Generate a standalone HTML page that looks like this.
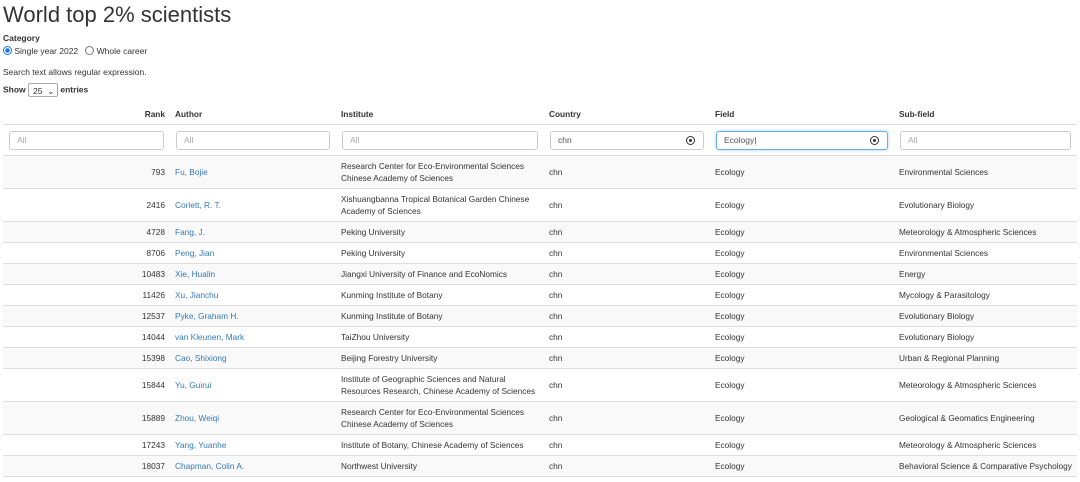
<!DOCTYPE html>
<html><head><meta charset="utf-8"><style>
body{margin:0;background:#fff;font-family:"Liberation Sans",Arial,sans-serif;color:#333;width:1080px;height:482px;overflow:hidden;position:relative}
h1{position:absolute;left:3px;top:2px;margin:0;font-weight:normal;font-size:22px;color:#333}
.t{position:absolute;font-size:8.5px}
table{position:absolute;left:3px;top:104px;width:1074px;border-collapse:collapse;table-layout:fixed;font-size:8.3px}
td,th{padding:0 5px;text-align:left;vertical-align:middle;line-height:12px;white-space:nowrap;overflow:hidden}
th{height:20px;font-weight:bold;border-bottom:1px solid #ddd}
tr.f td{height:30px;border-bottom:1px solid #ddd;padding:0 6px}
.in{height:19px;border:1px solid #ccc;border-radius:3px;box-sizing:border-box;color:#aaa;padding-left:7px;line-height:17px;position:relative;font-size:8.5px}
.in.v{color:#555}.in.foc{border-color:#66afe9;box-shadow:0 0 3px rgba(102,175,233,.6)}
.x{position:absolute;right:8px;top:4px;width:7px;height:7px;border:1px solid #333;border-radius:50%}
.x:after{content:"";position:absolute;left:2px;top:2px;width:3px;height:3px;background:#333;border-radius:50%}
tbody tr td{border-bottom:1px solid #ddd;color:#333}
tbody tr:nth-child(odd) td{background:#f9f9f9}
td.r{text-align:right}
a{color:#337ab7;text-decoration:none}
.h1r td{height:32px}.h2r td{height:20px}
</style></head><body>
<h1>World top 2% scientists</h1>
<div class="t" style="left:3px;top:33px;font-weight:bold">Category</div>
<div class="t" style="left:3px;top:46px"><span style="display:inline-block;width:7px;height:7px;border-radius:50%;border:1px solid #1a73e8;vertical-align:-1px;background:radial-gradient(#1a73e8 40%,#fff 50%)"></span> Single year 2022 &nbsp; <span style="display:inline-block;width:7px;height:7px;border-radius:50%;border:1px solid #777;vertical-align:-1px"></span> Whole career</div>
<div class="t" style="left:3px;top:67px">Search text allows regular expression.</div>
<div class="t" style="left:3px;top:83px;font-weight:bold">Show <span style="display:inline-block;width:30px;height:14px;border:1px solid #aaa;border-radius:2px;font-weight:normal;line-height:14px;padding-left:4px;box-sizing:border-box;vertical-align:middle">25 &nbsp;⌄</span> entries</div>
<table>
<colgroup><col style="width:167px"><col style="width:166px"><col style="width:208px"><col style="width:166px"><col style="width:184px"><col></colgroup>
<thead><tr><th style="text-align:right">Rank</th><th>Author</th><th>Institute</th><th>Country</th><th>Field</th><th>Sub-field</th></tr>
<tr class="f"><td><div class="in">All</div></td><td><div class="in">All</div></td><td><div class="in">All</div></td><td><div class="in v">chn<span class="x"></span></div></td><td><div class="in v foc">Ecology|<span class="x"></span></div></td><td><div class="in">All</div></td></tr></thead>
<tbody>
<tr class="h1r"><td class="r">793</td><td><a>Fu, Bojie</a></td><td>Research Center for Eco-Environmental Sciences<br>Chinese Academy of Sciences</td><td>chn</td><td>Ecology</td><td>Environmental Sciences</td></tr>
<tr class="h1r"><td class="r">2416</td><td><a>Corlett, R. T.</a></td><td>Xishuangbanna Tropical Botanical Garden Chinese<br>Academy of Sciences</td><td>chn</td><td>Ecology</td><td>Evolutionary Biology</td></tr>
<tr class="h2r"><td class="r">4728</td><td><a>Fang, J.</a></td><td>Peking University</td><td>chn</td><td>Ecology</td><td>Meteorology &amp; Atmospheric Sciences</td></tr>
<tr class="h2r"><td class="r">8706</td><td><a>Peng, Jian</a></td><td>Peking University</td><td>chn</td><td>Ecology</td><td>Environmental Sciences</td></tr>
<tr class="h2r"><td class="r">10483</td><td><a>Xie, Hualin</a></td><td>Jiangxi University of Finance and EcoNomics</td><td>chn</td><td>Ecology</td><td>Energy</td></tr>
<tr class="h2r"><td class="r">11426</td><td><a>Xu, Jianchu</a></td><td>Kunming Institute of Botany</td><td>chn</td><td>Ecology</td><td>Mycology &amp; Parasitology</td></tr>
<tr class="h2r"><td class="r">12537</td><td><a>Pyke, Graham H.</a></td><td>Kunming Institute of Botany</td><td>chn</td><td>Ecology</td><td>Evolutionary Biology</td></tr>
<tr class="h2r"><td class="r">14044</td><td><a>van Kleunen, Mark</a></td><td>TaiZhou University</td><td>chn</td><td>Ecology</td><td>Evolutionary Biology</td></tr>
<tr class="h2r"><td class="r">15398</td><td><a>Cao, Shixiong</a></td><td>Beijing Forestry University</td><td>chn</td><td>Ecology</td><td>Urban &amp; Regional Planning</td></tr>
<tr class="h1r"><td class="r">15844</td><td><a>Yu, Guirui</a></td><td>Institute of Geographic Sciences and Natural<br>Resources Research, Chinese Academy of Sciences</td><td>chn</td><td>Ecology</td><td>Meteorology &amp; Atmospheric Sciences</td></tr>
<tr class="h1r"><td class="r">15889</td><td><a>Zhou, Weiqi</a></td><td>Research Center for Eco-Environmental Sciences<br>Chinese Academy of Sciences</td><td>chn</td><td>Ecology</td><td>Geological &amp; Geomatics Engineering</td></tr>
<tr class="h2r"><td class="r">17243</td><td><a>Yang, Yuanhe</a></td><td>Institute of Botany, Chinese Academy of Sciences</td><td>chn</td><td>Ecology</td><td>Meteorology &amp; Atmospheric Sciences</td></tr>
<tr class="h2r"><td class="r">18037</td><td><a>Chapman, Colin A.</a></td><td>Northwest University</td><td>chn</td><td>Ecology</td><td>Behavioral Science &amp; Comparative Psychology</td></tr>
</tbody></table>
</body></html>
